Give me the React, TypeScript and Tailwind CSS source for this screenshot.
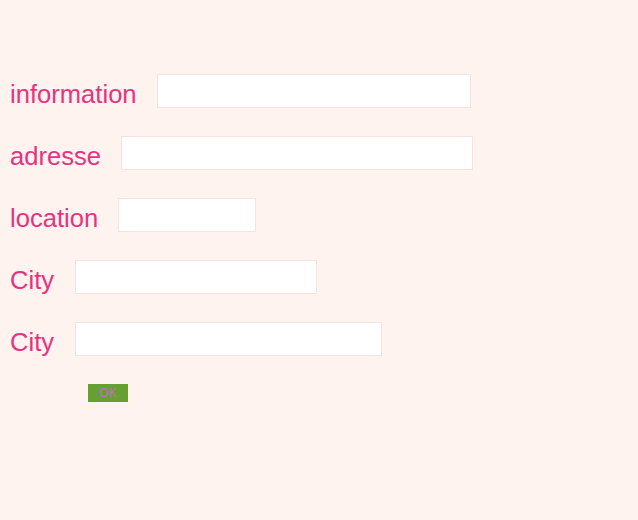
import React from "react";

const rows: { label: string; w: string; ml: string }[] = [
  { label: "information", w: "w-[314px]", ml: "ml-[20px]" },
  { label: "adresse", w: "w-[352px]", ml: "ml-[20px]" },
  { label: "location", w: "w-[138px]", ml: "ml-[20px]" },
  { label: "City", w: "w-[242px]", ml: "ml-[21px]" },
  { label: "City", w: "w-[307px]", ml: "ml-[21px]" },
];

export default function App() {
  return (
    <div
      className="w-[638px] h-[520px] bg-[#fef3ef] pt-[74px] pl-[10px]"
      style={{ fontFamily: '"Liberation Sans", Arial, sans-serif' }}
    >
      <div className="flex flex-col gap-[28px]">
        {rows.map((r, i) => (
          <div key={i} className="flex items-center">
            <span className="text-[25.6px] leading-none text-[#e8327f] pt-[8px]">{r.label}</span>
            <input className={`${r.ml} ${r.w} h-[34px] bg-white border border-[#f3e4df] outline-none`} />
          </div>
        ))}
      </div>
      <div className="mt-[28px] pl-[78px]">
        <button className="w-[40px] h-[18px] bg-[#66a030] text-[#c86cc0] text-[12px] leading-none flex items-center justify-center">
          OK
        </button>
      </div>
    </div>
  );
}
